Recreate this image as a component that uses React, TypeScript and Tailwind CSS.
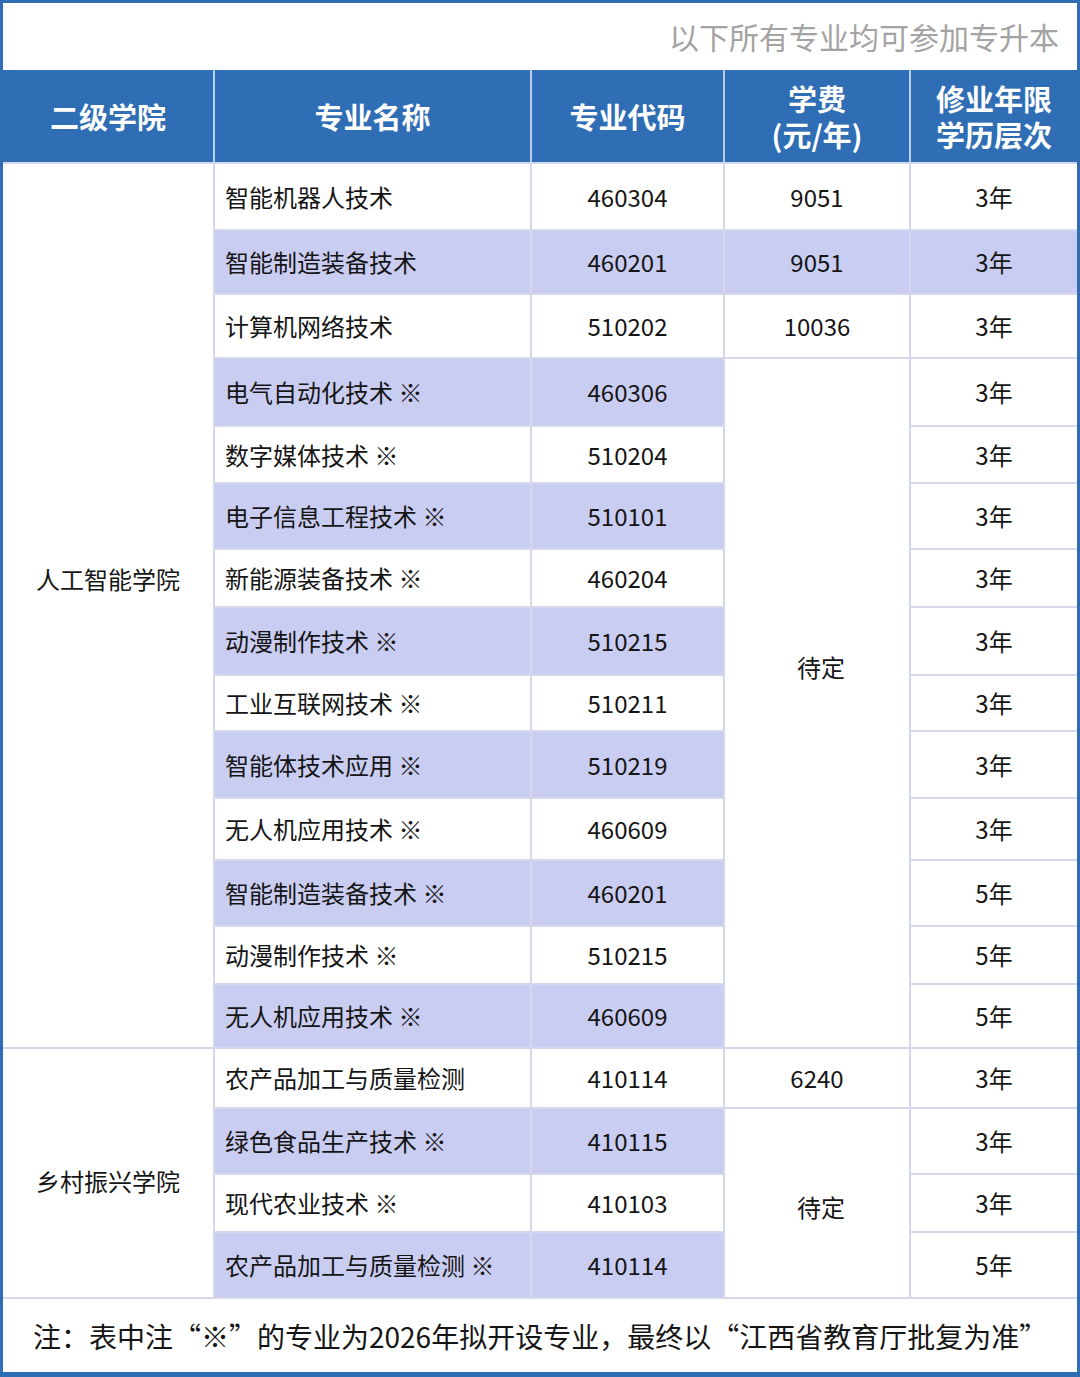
import React from 'react';

// 每行：专业名称、代码、学费（null 表示被合并的“待定”单元格占用）、年限
type Row = {
  name: string;
  code: string;
  fee: string | null;
  years: string;
  height: string;
};

const rows: Row[] = [
  { name: '智能机器人技术', code: '460304', fee: '9051', years: '3年', height: 'h-[65px]' },
  { name: '智能制造装备技术', code: '460201', fee: '9051', years: '3年', height: 'h-[62px]' },
  { name: '计算机网络技术', code: '510202', fee: '10036', years: '3年', height: 'h-[62px]' },
  { name: '电气自动化技术 ※', code: '460306', fee: null, years: '3年', height: 'h-[66px]' },
  { name: '数字媒体技术 ※', code: '510204', fee: null, years: '3年', height: 'h-[55px]' },
  { name: '电子信息工程技术 ※', code: '510101', fee: null, years: '3年', height: 'h-[64px]' },
  { name: '新能源装备技术 ※', code: '460204', fee: null, years: '3年', height: 'h-[56px]' },
  { name: '动漫制作技术 ※', code: '510215', fee: null, years: '3年', height: 'h-[66px]' },
  { name: '工业互联网技术 ※', code: '510211', fee: null, years: '3年', height: 'h-[54px]' },
  { name: '智能体技术应用 ※', code: '510219', fee: null, years: '3年', height: 'h-[65px]' },
  { name: '无人机应用技术 ※', code: '460609', fee: null, years: '3年', height: 'h-[60px]' },
  { name: '智能制造装备技术 ※', code: '460201', fee: null, years: '5年', height: 'h-[64px]' },
  { name: '动漫制作技术 ※', code: '510215', fee: null, years: '5年', height: 'h-[56px]' },
  { name: '无人机应用技术 ※', code: '460609', fee: null, years: '5年', height: 'h-[62px]' },
  { name: '农产品加工与质量检测', code: '410114', fee: '6240', years: '3年', height: 'h-[58px]' },
  { name: '绿色食品生产技术 ※', code: '410115', fee: null, years: '3年', height: 'h-[64px]' },
  { name: '现代农业技术 ※', code: '410103', fee: null, years: '3年', height: 'h-[56px]' },
  { name: '农产品加工与质量检测 ※', code: '410114', fee: null, years: '5年', height: 'h-[64px]' },
];

const shade = 'bg-[#cacdf2]';

export default function App() {
  return (
    <div className="w-[1080px] h-[1377px] bg-[#2f6eb5] pt-[3px] px-[3px] pb-[5px] font-['Microsoft_YaHei','Noto_Sans_CJK_SC',sans-serif] text-[#151515]">
      <div className="bg-white h-full flex flex-col">
        {/* Title */}
        <div className="h-[67px] flex items-center justify-end pr-[18px] text-[30px] text-[#a3a3a3]">
          以下所有专业均可参加专升本
        </div>

        {/* Header */}
        <div className="grid grid-cols-[210px_315px_191px_184px_166px] gap-x-[2px] bg-[#b9cdea] h-[92px] text-white font-bold text-[29px] leading-[36px]">
          <div className="bg-[#2f6eb5] flex items-center justify-center">二级学院</div>
          <div className="bg-[#2f6eb5] flex items-center justify-center">专业名称</div>
          <div className="bg-[#2f6eb5] flex items-center justify-center">专业代码</div>
          <div className="bg-[#2f6eb5] flex items-center justify-center text-center">
            <span>
              学费
              <br />
              (元/年)
            </span>
          </div>
          <div className="bg-[#2f6eb5] flex items-center justify-center text-center">
            <span>
              修业年限
              <br />
              学历层次
            </span>
          </div>
        </div>

        {/* Body */}
        <div className="grid grid-cols-[210px_315px_191px_184px_166px] gap-[2px] pt-[2px] pb-[2px] bg-[#d5d7ec] text-[24px] leading-none">
          <div className="bg-white row-start-1 row-end-[15] col-start-1 flex items-center justify-center pb-[53px]">
            人工智能学院
          </div>
          <div className="bg-white row-start-[15] row-end-[19] col-start-1 flex items-center justify-center pt-[16px]">
            乡村振兴学院
          </div>
          <div className="bg-white row-start-4 row-end-[15] col-start-4 flex items-center justify-center pb-[72px] pl-[8px]">
            待定
          </div>
          <div className="bg-white row-start-[16] row-end-[19] col-start-4 flex items-center justify-center pt-[8px] pl-[8px]">
            待定
          </div>

          {rows.map((r, i) => {
            const even = i % 2 === 1;
            const bg = even ? shade : 'bg-white';
            const line = i + 1;
            return (
              <React.Fragment key={i}>
                <div
                  className={`${bg} ${r.height} col-start-2 flex items-center pl-[10px]`}
                  style={{ gridRowStart: line }}
                >
                  {r.name}
                </div>
                <div
                  className={`${bg} col-start-3 flex items-center justify-center`}
                  style={{ gridRowStart: line }}
                >
                  {r.code}
                </div>
                {r.fee !== null && (
                  <div
                    className={`${i === 1 ? shade : 'bg-white'} col-start-4 flex items-center justify-center`}
                    style={{ gridRowStart: line }}
                  >
                    {r.fee}
                  </div>
                )}
                <div
                  className={`${i === 1 ? shade : 'bg-white'} col-start-5 flex items-center justify-center`}
                  style={{ gridRowStart: line }}
                >
                  {r.years}
                </div>
              </React.Fragment>
            );
          })}
        </div>

        {/* Footer note */}
        <div className="flex-1 flex items-center pl-[30px] text-[28px]">
          注：表中注“※”的专业为2026年拟开设专业，最终以“江西省教育厅批复为准”
        </div>
      </div>
    </div>
  );
}
